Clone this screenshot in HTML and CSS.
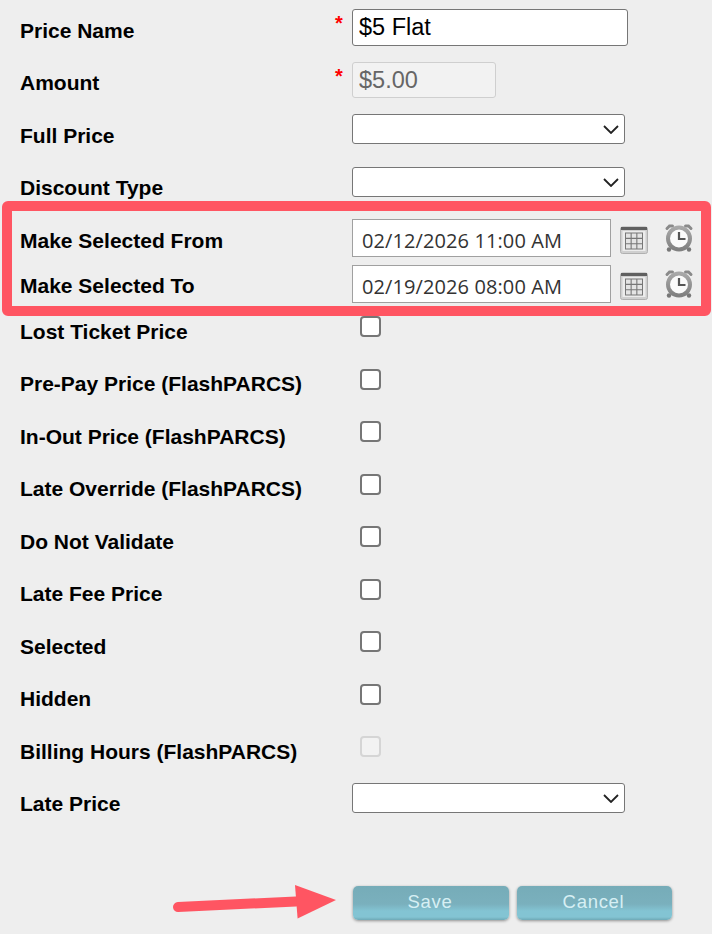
FILE: index.html
```html
<!DOCTYPE html>
<html lang="en">
<head>
<meta charset="utf-8">
<title>Price</title>
<link rel="stylesheet" href="styles.css">
</head>
<body>
<svg class="defs" width="0" height="0">
  <defs>
    <linearGradient id="ring" x1="0" y1="0" x2="0" y2="1"><stop offset="0" stop-color="#a8a8a8"/><stop offset="1" stop-color="#808080"/></linearGradient>
  </defs>
  <symbol id="cal" viewBox="0 0 28 28">
    <rect x="0.500" y="1" width="27" height="26.500" rx="2" fill="#cfcfcf" stroke="#b0b0b0"/>
    <rect x="1" y="1" width="26" height="3" fill="#606060"/>
    <rect x="2.500" y="5" width="23" height="20" fill="#ececec"/>
    <path d="M5 6.500h18v17H5z" fill="#777"/>
    <path d="M6 7.500h4.600v4.300H6zM11.700 7.500h4.600v4.300h-4.600zM17.400 7.500h4.600v4.300h-4.600zM6 12.900h4.600v4.300H6zM11.700 12.900h4.600v4.300h-4.600zM17.400 12.900h4.600v4.300h-4.600zM6 18.300h4.600v4.200H6zM11.700 18.300h4.600v4.200h-4.600zM17.400 18.300h4.600v4.200h-4.600z" fill="#e4e4e4"/>
  </symbol>
  <symbol id="clock" viewBox="0 0 30 30">
    <path d="M3 5.500 5.500 3h3M27 5.500 24.500 3h-3" fill="none" stroke="#8a8a8a" stroke-width="3" stroke-linecap="round"/>
    <circle cx="5" cy="26.500" r="2.200" fill="#777"/>
    <circle cx="25" cy="26.500" r="2.200" fill="#777"/>
    <circle cx="15" cy="15.500" r="11" fill="#fafafa" stroke="url(#ring)" stroke-width="4"/>
    <path d="M15 9v7h6.500" fill="none" stroke="#555" stroke-width="2.200"/>
  </symbol>
</svg>
<form class="form">
  <div class="row"><label class="label">Price Name</label><span class="req">*</span><input class="text name" type="text" value="$5 Flat"></div>
  <div class="row"><label class="label">Amount</label><span class="req">*</span><input class="text amount" type="text" value="$5.00" disabled></div>
  <div class="row"><label class="label">Full Price</label><div class="select"><svg class="chev" width="16" height="9" viewBox="0 0 16 9"><path d="M1 1l7 7 7-7" fill="none" stroke="#222" stroke-width="1.800"/></svg></div></div>
  <div class="row"><label class="label">Discount Type</label><div class="select"><svg class="chev" width="16" height="9" viewBox="0 0 16 9"><path d="M1 1l7 7 7-7" fill="none" stroke="#222" stroke-width="1.800"/></svg></div></div>
  <div class="date-group">
    <div class="row date"><label class="label">Make Selected From</label><input class="datebox" type="text" value="02/12/2026 11:00 AM"><svg class="ico-cal"><use href="#cal"/></svg><svg class="ico-clock"><use href="#clock"/></svg></div>
    <div class="row date"><label class="label">Make Selected To</label><input class="datebox" type="text" value="02/19/2026 08:00 AM"><svg class="ico-cal"><use href="#cal"/></svg><svg class="ico-clock"><use href="#clock"/></svg></div>
  </div>
  <div class="row check"><label class="label">Lost Ticket Price</label><span class="box"></span></div>
  <div class="row check"><label class="label">Pre-Pay Price (FlashPARCS)</label><span class="box"></span></div>
  <div class="row check"><label class="label">In-Out Price (FlashPARCS)</label><span class="box"></span></div>
  <div class="row check"><label class="label">Late Override (FlashPARCS)</label><span class="box"></span></div>
  <div class="row check"><label class="label">Do Not Validate</label><span class="box"></span></div>
  <div class="row check"><label class="label">Late Fee Price</label><span class="box"></span></div>
  <div class="row check"><label class="label">Selected</label><span class="box"></span></div>
  <div class="row check"><label class="label">Hidden</label><span class="box"></span></div>
  <div class="row check"><label class="label">Billing Hours (FlashPARCS)</label><span class="box off"></span></div>
  <div class="row late"><label class="label">Late Price</label><div class="select"><svg class="chev" width="16" height="9" viewBox="0 0 16 9"><path d="M1 1l7 7 7-7" fill="none" stroke="#222" stroke-width="1.800"/></svg></div></div>
  <div class="actions">
    <button class="btn save" type="button">Save</button>
    <button class="btn cancel" type="button">Cancel</button>
  </div>
</form>
<div class="highlight"></div>
<svg class="arrow" width="170" height="40" viewBox="0 0 170 40"><path d="M10 23 128 17.500" stroke="#ff5562" stroke-width="10" stroke-linecap="round"/><path d="M127 1l41 15-38.400 18.600z" fill="#ff5562"/></svg>
</body>
</html>
```
FILE: styles.css
```css
html, body { margin: 0; padding: 0; }
body {
  width: 712px;
  height: 934px;
  overflow: hidden;
  background: #eeeeee;
  font-family: "Liberation Sans", Arial, sans-serif;
  position: relative;
}
.defs { position: absolute; }
.form { display: flex; flex-direction: column; padding: 9px 0 0 20px; }
.row {
  display: flex;
  align-items: flex-start;
  height: 52.5px;
  position: relative;
}
.label {
  width: 332px;
  flex: none;
  font-size: 21px;
  font-weight: 700;
  line-height: 23px;
  color: #000;
  padding-top: 9.5px;
  white-space: nowrap;
}
.req {
  position: absolute;
  left: 315px;
  top: 3px;
  color: #f00;
  font-size: 20px;
  line-height: 23px;
  font-weight: 700;
}
.text {
  box-sizing: border-box;
  margin: 0;
  border: 1px solid #767676;
  border-radius: 3px;
  background: #fff;
  font-family: "Liberation Sans", Arial, sans-serif;
  font-size: 23.5px;
  padding: 0 6px;
  color: #000;
  outline: none;
}
.name { width: 276px; height: 37px; }
.amount {
  width: 144px;
  height: 36px;
  background: #f2f2f2;
  border-color: #cfcfcf;
  color: #666;
  margin-top: 0.5px;
}
.select {
  box-sizing: border-box;
  width: 273px;
  height: 30px;
  border: 1px solid #767676;
  border-radius: 3px;
  background: #fff;
  position: relative;
}
.chev { position: absolute; right: 5px; top: 10px; }
.date-group { display: flex; flex-direction: column; }
.date { height: 46px; }
.date .label { padding-top: 10px; }
.date + .date .label { padding-top: 9px; }
.datebox {
  box-sizing: border-box;
  margin: 0;
  width: 259px;
  height: 38px;
  border: 1px solid #a0a0a0;
  background: #fff;
  font-family: "Open Sans", sans-serif;
  font-size: 20px;
  letter-spacing: 0.1px;
  color: #333;
  padding: 4px 9px 0;
  outline: none;
}
.ico-cal { width: 28px; height: 28px; margin: 7px 0 0 9px; flex: none; }
.ico-clock { width: 30px; height: 30px; margin: 4px 0 0 16px; flex: none; }
.box {
  box-sizing: border-box;
  width: 21px;
  height: 21px;
  margin: 5px 0 0 8px;
  border: 2px solid #767676;
  border-radius: 4px;
  background: #fff;
  flex: none;
}
.box.off { background: #f2f2f2; border-color: #d5d5d5; }
.check .label { padding-top: 8.5px; }
.late { margin-top: -0.5px; }
.late .label { padding-top: 8.5px; }
.actions { display: flex; gap: 8px; padding: 50.500px 0 0 333px; }
.btn {
  box-sizing: border-box;
  width: 156px;
  height: 34px;
  margin: 0;
  border: 0;
  border-radius: 5px;
  background: linear-gradient(#76acb8, #7ab0bd 18px, #83c4d3 25px, #83c4d3 31px, #6fa9b6 34px);
  box-shadow: 0 1px 3px rgba(0,0,0,.4);
  color: #d6eff4;
  font-family: "Liberation Sans", Arial, sans-serif;
  font-size: 18.500px;
  letter-spacing: 0.7px;
  padding: 0 2px 3px 0;
}
.cancel { width: 155px; }
.highlight {
  position: absolute;
  left: 2px;
  top: 201px;
  width: 709px;
  height: 115px;
  box-sizing: border-box;
  border: 10px solid #ff5562;
  border-radius: 6px;
}
.arrow { position: absolute; left: 168px; top: 884px; }
```
